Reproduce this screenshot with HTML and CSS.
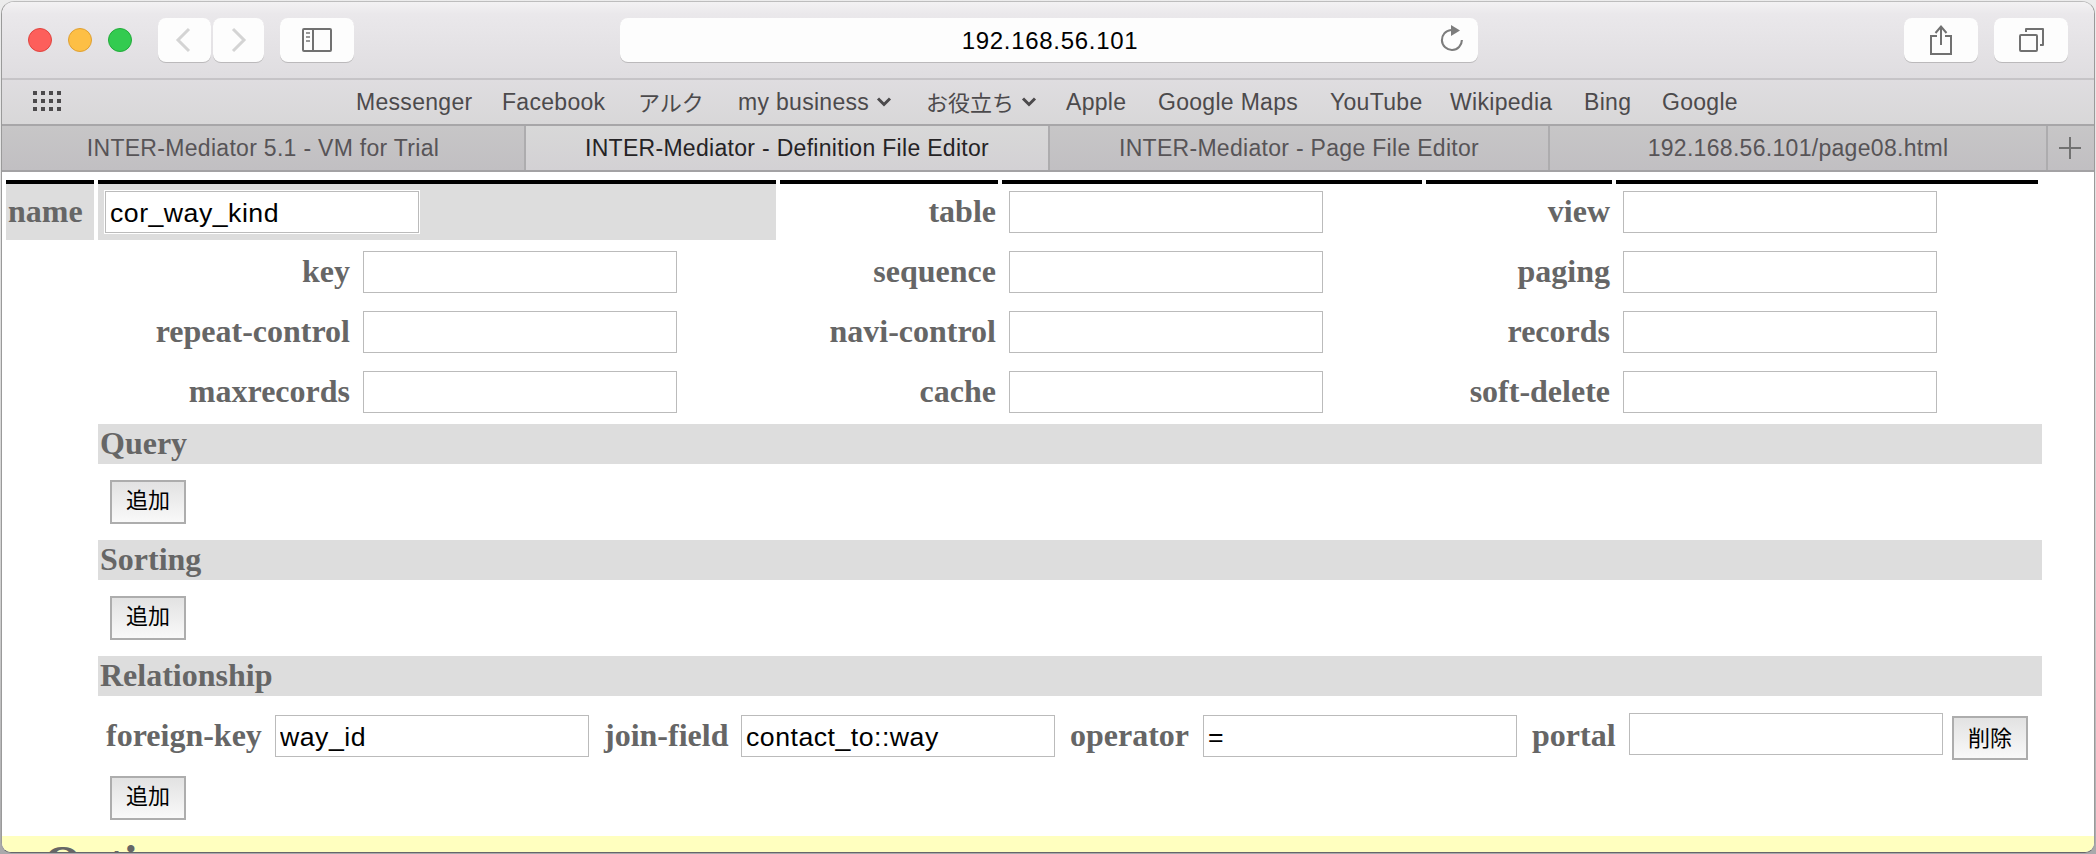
FILE: index.html
```
<!DOCTYPE html>
<html lang="ja">
<head>
<meta charset="utf-8">
<title>INTER-Mediator - Definition File Editor</title>
<link rel="stylesheet" href="styles.css">
</head>
<body>
<div class="window">
  <header class="toolbar">
    <div class="lights"><i class="light red"></i><i class="light amber"></i><i class="light green"></i></div>
    <div class="nav">
      <button class="tool back"><svg width="20" height="28" viewBox="0 0 20 28"><path d="M14 3 3 14l11 11" fill="none" stroke="#d4d4d4" stroke-width="3"/></svg></button>
      <button class="tool forward"><svg width="20" height="28" viewBox="0 0 20 28"><path d="M4 3l11 11L4 25" fill="none" stroke="#d4d4d4" stroke-width="3"/></svg></button>
    </div>
    <button class="tool sidebar"><svg width="30" height="24" viewBox="0 0 30 24"><rect x="1" y="1" width="28" height="22" rx="1" fill="none" stroke="#717171" stroke-width="2"/><path d="M11 1v22" stroke="#717171" stroke-width="2"/><path d="M4 5h4M4 9h4M4 13h4" stroke="#999" stroke-width="2"/></svg></button>
    <div class="address"><span>192.168.56.101</span>
      <svg class="reload" width="26" height="30" viewBox="0 0 26 30"><path d="M22.9 16A10 10 0 1 1 12 6" fill="none" stroke="#7d7d7d" stroke-width="2.1"/><path d="M12 1v11l9-5.5z" fill="#7d7d7d"/></svg>
    </div>
    <div class="actions">
      <button class="tool"><svg width="24" height="32" viewBox="0 0 24 32"><path d="M8 12H2v18h20V12h-6M12 21V3M6.500 9 12 2.500 17.500 9" fill="none" stroke="#717171" stroke-width="2"/></svg></button>
      <button class="tool"><svg width="26" height="26" viewBox="0 0 26 26"><rect x="2" y="8" width="17" height="16" rx="1" fill="none" stroke="#717171" stroke-width="2"/><path d="M8 5V2h17v16h-3" fill="none" stroke="#717171" stroke-width="2" stroke-linejoin="round"/></svg></button>
    </div>
  </header>
  <nav class="bookmarks">
    <svg class="apps" width="28" height="20" viewBox="0 0 28 20"><path d="M0 2h28M0 10h28M0 18h28" stroke="#4c4a4c" stroke-width="4" stroke-dasharray="4 4"/></svg>
    <a>Messenger</a><a>Facebook</a><a class="jp">アルク</a>
    <a class="folder">my business<svg width="16" height="12" viewBox="0 0 16 12"><path d="M2 2.500 8 8.500 14 2.500" fill="none" stroke="#4c4a4c" stroke-width="3"/></svg></a>
    <a class="folder"><span class="jp">お役立ち</span><svg width="16" height="12" viewBox="0 0 16 12"><path d="M2 2.500 8 8.500 14 2.500" fill="none" stroke="#4c4a4c" stroke-width="3"/></svg></a>
    <a>Apple</a><a>Google Maps</a><a>YouTube</a><a>Wikipedia</a><a>Bing</a><a>Google</a>
  </nav>
  <div class="tabs">
    <div class="tab">INTER-Mediator 5.1 - VM for Trial</div>
    <div class="tab active">INTER-Mediator - Definition File Editor</div>
    <div class="tab">INTER-Mediator - Page File Editor</div>
    <div class="tab">192.168.56.101/page08.html</div>
    <div class="tab add"><svg width="22" height="22" viewBox="0 0 22 22"><path d="M11 0v22M0 11h22" stroke="#717171" stroke-width="2"/></svg></div>
  </div>
  <main class="page">
    <div class="fields">
      <div class="cell top shaded name">name</div>
      <div class="cell top shaded value"><input class="outlined" value="cor_way_kind"></div>
      <div class="cell top label">table</div><div class="cell top value"><input></div>
      <div class="cell top label">view</div><div class="cell top value"><input></div>

      <div class="cell pair"><span class="label">key</span><input></div>
      <div class="cell label">sequence</div><div class="cell value"><input></div>
      <div class="cell label">paging</div><div class="cell value"><input></div>

      <div class="cell pair"><span class="label">repeat-control</span><input></div>
      <div class="cell label">navi-control</div><div class="cell value"><input></div>
      <div class="cell label">records</div><div class="cell value"><input></div>

      <div class="cell pair"><span class="label">maxrecords</span><input></div>
      <div class="cell label">cache</div><div class="cell value"><input></div>
      <div class="cell label">soft-delete</div><div class="cell value"><input></div>
    </div>
    <section class="group"><h3>Query</h3><button class="push">追加</button></section>
    <section class="group"><h3>Sorting</h3><button class="push">追加</button></section>
    <section class="group">
      <h3>Relationship</h3>
      <div class="relation">
        <label>foreign-key</label><input value="way_id">
        <label>join-field</label><input value="contact_to::way">
        <label>operator</label><input value="=">
        <label>portal</label><input class="raised">
        <button class="push delete">削除</button>
      </div>
      <button class="push">追加</button>
    </section>
    <h2 class="options">Options</h2>
  </main>
</div>
</body>
</html>
```
FILE: styles.css
```
* { box-sizing: border-box; }
html, body { height: 100%; }
body {
  margin: 0;
  padding: 1px 1px 1px;
  overflow: hidden;
  background: linear-gradient(#ececec, #cfcfcf 70%, #a9a9ab);
  font-family: "Liberation Sans", "Noto Sans CJK JP", sans-serif;
}
svg { display: block; flex: none; }
.window {
  height: 852px;
  border: 1px solid #9a9a9a;
  border-top-color: #bdbdbd;
  border-bottom-color: #66666a;
  border-radius: 13px 13px 10px 10px;
  overflow: hidden;
  background: #fff;
}
.toolbar {
  display: flex;
  height: 78px;
  padding: 16px 26px 0;
  border-bottom: 2px solid #c6c4c7;
  background: linear-gradient(#f3f2f3, #eae8eb 12px, #dfdde0);
}
.lights { display: flex; gap: 16px; padding-top: 10px; width: 130px; }
.light { width: 24px; height: 24px; border-radius: 50%; }
.red { background: #fd5f5b; border: 1px solid #e0443f; }
.amber { background: #fdbf45; border: 1px solid #dfa033; }
.green { background: #33cb50; border: 1px solid #22ab3a; }
.nav { display: flex; gap: 2px; margin-right: 16px; }
.tool {
  display: flex;
  align-items: center;
  justify-content: center;
  width: 74px;
  height: 44px;
  padding: 0;
  border: 0;
  border-radius: 8px;
  background: #fdfdfd;
  box-shadow: 0 1px 0 #bbb9bb;
}
.back { width: 53px; }
.forward { width: 51px; }
.address {
  display: grid;
  grid-template-columns: 41px 1fr 41px;
  align-items: center;
  width: 858px;
  height: 44px;
  margin-left: 266px;
  border-radius: 8px;
  background: #fdfdfd;
  box-shadow: 0 1px 0 #bbb9bb;
  font-size: 24px;
  letter-spacing: .7px;
}
.address span { grid-column: 2; padding: 2px 0 0 2px; text-align: center; }
.reload { margin: 0 0 2px 2px; }
.sidebar { padding-left: 0; }
.actions { display: flex; gap: 16px; margin-left: auto; }
.bookmarks {
  display: grid;
  grid-template-columns: 323px 146px 136px 100px 188px 140px 92px 172px 120px 134px 78px 100px;
  align-items: center;
  height: 46px;
  padding-left: 31px;
  border-bottom: 2px solid #a7a6a8;
  background: linear-gradient(#dfdde0, #d8d7d8);
  color: #4c4a4c;
  font-size: 23px;
  letter-spacing: .3px;
  white-space: nowrap;
}
.apps { margin-bottom: 2px; }
.jp { padding-bottom: 3px; font-size: 22px; letter-spacing: 0; }
.folder { display: flex; align-items: center; gap: 7px; }
.tabs {
  display: grid;
  grid-template-columns: 524px 524px 500px 498px 1fr;
  height: 46px;
  border-bottom: 2px solid #a3a2a4;
  background: linear-gradient(#c7c6c7, #c1bfc2);
}
.tab {
  display: flex;
  align-items: center;
  justify-content: center;
  border-right: 2px solid #adacae;
  color: #575457;
  font-size: 23px;
  letter-spacing: .3px;
}
.active { background: linear-gradient(#d8d8d8, #d3d1d4); color: #252325; }
.add { padding-right: 2px; border-right: 0; }
.page {
  padding: 8px 0 0 4px;
  color: #666;
  font: bold 32px/36px "Liberation Serif", "Noto Sans CJK JP", serif;
}
.fields {
  display: grid;
  grid-template-columns: 88px 678px 218px 420px 186px 422px;
  grid-auto-rows: 60px;
  column-gap: 4px;
}
.cell { display: flex; align-items: center; padding-bottom: 2px; padding-top: 6px; }
.top { border-top: 4px solid #000; padding-top: 2px; }
.shaded { background: #ddd; }
.name { padding-left: 2px; padding-bottom: 4px; }
.label { justify-content: flex-end; padding-right: 2px; padding-bottom: 4px; }
.value { padding-left: 7px; padding-top: 7px; }
.top.value { padding-top: 3px; padding-bottom: 3px; }
.value:not(.top) { padding-bottom: 3px; }
.pair { grid-column: 2; }
.pair .label { width: 265px; padding: 0 13px 2px 0; text-align: right; }
input {
  display: block;
  flex: none;
  width: 314px;
  height: 42px;
  margin: 0;
  padding: 3px 4px 0;
  border: 1px solid #bbb;
  background: #fff;
  color: #000;
  font: 26.67px "Liberation Sans", sans-serif;
  letter-spacing: .5px;
}
.outlined { box-shadow: 0 0 0 1px #fff; }
.group { width: 1944px; margin: 4px 0 16px 92px; }
.group + .group { margin-top: 0; }
.group h3 {
  height: 40px;
  margin: 0 0 16px;
  padding-left: 2px;
  background: #ddd;
  font-size: 32px;
  line-height: 38px;
}
.push {
  display: block;
  flex: none;
  width: 76px;
  height: 44px;
  margin-left: 12px;
  padding: 0 0 8px;
  border: 2px solid #adadad;
  background: linear-gradient(#e2e2e2, #f9f9f9);
  color: #000;
  font: 22px/32px "Noto Sans CJK JP", sans-serif;
}
.relation { display: flex; height: 64px; padding: 3px 0 0 8px; }
.relation label { height: 42px; line-height: 40px; white-space: nowrap; }
.relation input { margin: 0 14px 0 0; }
.relation label:nth-of-type(1) { width: 169px; }
.relation label:nth-of-type(2) { width: 138px; padding-left: 1px; }
.relation label:nth-of-type(3) { width: 134px; padding-left: 1px; }
.relation label:nth-of-type(4) { width: 98px; padding-left: 1px; }
.relation .raised { margin: -2px 9px 0 0; }
.relation .delete { margin: 1px 0 0; padding-bottom: 5px; }
.options {
  height: 80px;
  margin: 0 0 0 -4px;
  padding: 0 0 0 42px;
  background: #ffffbf;
  font-size: 48px;
  line-height: 54px;
}
```
